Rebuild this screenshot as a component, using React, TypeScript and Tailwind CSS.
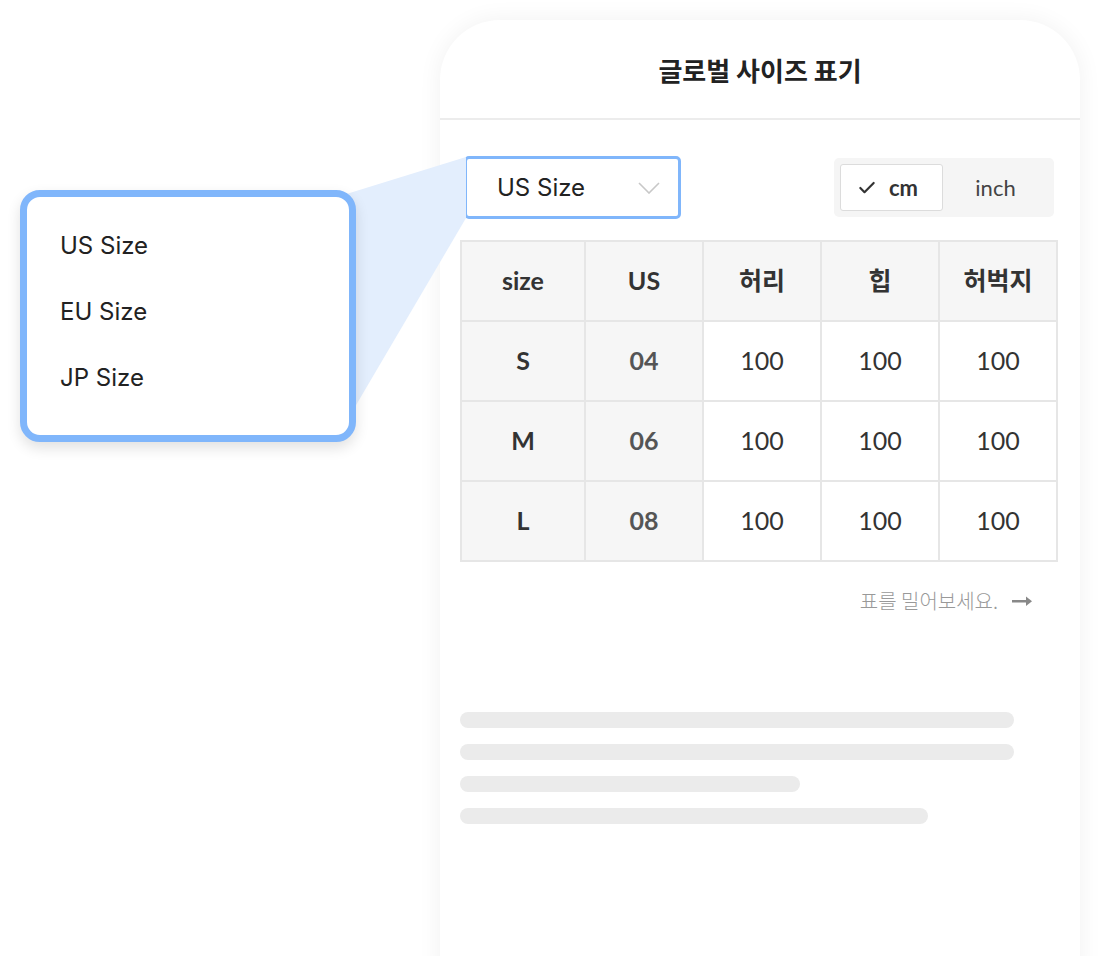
import { Check } from 'lucide-react';

const rows = [
    { size: 'S', us: '04' },
    { size: 'M', us: '06' },
    { size: 'L', us: '08' },
];

const kr = "font-['Noto_Sans_CJK_KR',sans-serif]";
const latin = "font-['Inter','Noto_Sans_CJK_KR',sans-serif]";
const lato = "font-['Lato','Noto_Sans_CJK_KR',sans-serif]";

export default function App() {
    return (
        <div className="relative w-[1120px] h-[956px] overflow-hidden bg-white">
            {/* Phone card */}
            <div className="ml-[440px] mt-[20px] w-[640px] h-[960px] rounded-t-[60px] bg-white shadow-[0_0_24px_rgba(0,0,0,0.06)] flex flex-col">
                <div className={`h-[100px] flex items-center justify-center border-b-2 border-[#ececec] text-[26px] font-semibold text-[#222] ${kr}`}>
                    글로벌 사이즈 표기
                </div>

                <div className="pl-[20px] pr-[24px] pt-[36px] flex flex-col">
                    {/* Controls */}
                    <div className="flex items-start justify-between">
                        <div className="ml-[4px] w-[217px] h-[63px] rounded-[5px] border-[3px] border-[#80b6fb] bg-white flex items-center justify-between pl-[30px] pr-[18px]">
                            <span className={`text-[24px] text-[#222] ${latin}`}>US Size</span>
                            <svg width="22" height="12" viewBox="0 0 22 12" fill="none">
                                <path d="M1 1l10 10L21 1" stroke="#c8c8c8" strokeWidth="1.6" />
                            </svg>
                        </div>
                        <div className="mt-[2px] mr-[2px] w-[220px] h-[59px] rounded-[5px] bg-[#f5f5f5] flex items-center p-[6px]">
                            <div className="w-[103px] h-[47px] rounded-[3px] bg-white border border-[#dcdcdc] flex items-center justify-center gap-[12px] pr-2">
                                <Check className="w-[20px] h-[20px] text-[#333]" strokeWidth={2.6} />
                                <span className={`text-[22px] font-bold text-[#333] ${lato}`}>cm</span>
                            </div>
                            <div className={`flex-1 text-center text-[22px] text-[#444] ${lato}`}>inch</div>
                        </div>
                    </div>

                    {/* Table */}
                    <table className={`mt-[21px] w-[596px] border-collapse table-fixed ${lato}`}>
                        <colgroup>
                            <col className="w-[124px]" />
                            <col className="w-[118px]" />
                            <col className="w-[118px]" />
                            <col className="w-[118px]" />
                            <col className="w-[118px]" />
                        </colgroup>
                        <thead>
                            <tr className="h-[80px] bg-[#f6f6f6]">
                                {['size', 'US', '허리', '힙', '허벅지'].map((h) => (
                                    <th key={h} className="border-2 border-[#e6e6e6] text-[25px] font-bold text-[#333]">
                                        {h}
                                    </th>
                                ))}
                            </tr>
                        </thead>
                        <tbody>
                            {rows.map((r) => (
                                <tr key={r.size} className="h-[80px]">
                                    <td className="border-2 border-[#e6e6e6] bg-[#f6f6f6] text-center text-[25px] font-bold text-[#333]">{r.size}</td>
                                    <td className="border-2 border-[#e6e6e6] bg-[#f6f6f6] text-center text-[25px] font-bold text-[#555]">{r.us}</td>
                                    <td className="border-2 border-[#e6e6e6] text-center text-[25px] text-[#333]">100</td>
                                    <td className="border-2 border-[#e6e6e6] text-center text-[25px] text-[#333]">100</td>
                                    <td className="border-2 border-[#e6e6e6] text-center text-[25px] text-[#333]">100</td>
                                </tr>
                            ))}
                        </tbody>
                    </table>

                    {/* Hint */}
                    <div className="mt-[24px] pr-[24px] flex items-center justify-end gap-[14px]">
                        <span className={`text-[20px] font-light text-[#999] ${kr}`}>표를 밀어보세요.</span>
                        <svg width="20" height="10" viewBox="0 0 20 10">
                            <rect x="0" y="4" width="15" height="2.5" fill="#888" />
                            <path d="M14 0.5L20 5.2L14 10z" fill="#888" />
                        </svg>
                    </div>

                    {/* Skeleton lines */}
                    <div className="mt-[96px] flex flex-col gap-[16px]">
                        <div className="h-[16px] w-[554px] rounded-full bg-[#ebebeb]" />
                        <div className="h-[16px] w-[554px] rounded-full bg-[#ebebeb]" />
                        <div className="h-[16px] w-[340px] rounded-full bg-[#ebebeb]" />
                        <div className="h-[16px] w-[468px] rounded-full bg-[#ebebeb]" />
                    </div>
                </div>
            </div>

            {/* Zoom beam linking the select to the popup */}
            <svg className="absolute left-0 top-0 pointer-events-none" width="1120" height="956">
                <polygon points="340,196 466,157 466,218 352,412" fill="#e3eefd" />
            </svg>

            {/* Popup showing options */}
            <div className="absolute left-[20px] top-[190px] w-[336px] h-[252px] rounded-[20px] border-[7px] border-[#80b6fb] bg-white shadow-[0_6px_14px_rgba(0,0,0,0.12)] flex flex-col pl-[33px] pt-[33px] gap-[34px]">
                {['US Size', 'EU Size', 'JP Size'].map((o) => (
                    <div key={o} className={`text-[24px] leading-[32px] text-[#222] ${latin}`}>{o}</div>
                ))}
            </div>
        </div>
    );
}
